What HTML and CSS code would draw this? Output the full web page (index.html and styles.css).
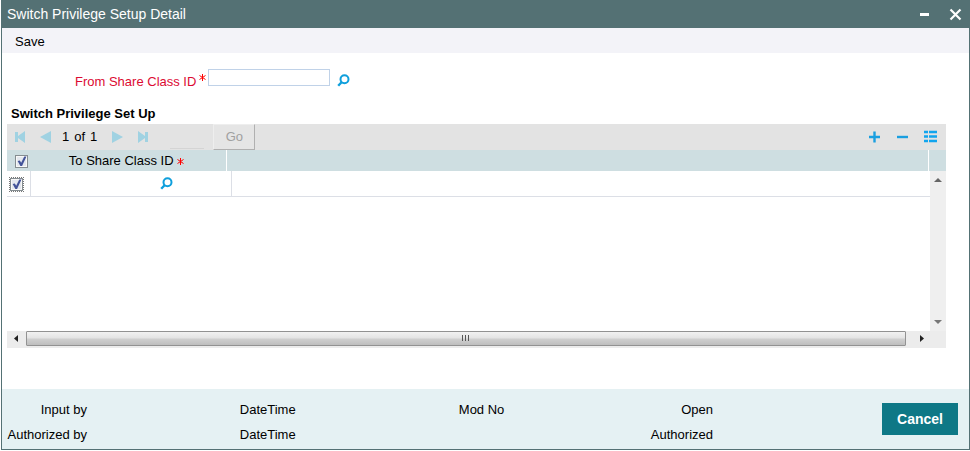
FILE: index.html
```
<!DOCTYPE html>
<html lang="en">

<head>
    <meta charset="UTF-8">
    <meta name="viewport" content="width=device-width, initial-scale=1.0">
    <title>Switch Privilege Setup Detail</title>
    <link rel="stylesheet" href="styles.css">
</head>

<body>

    <div class="window">
        <header class="title-bar">
            <h1>Switch Privilege Setup Detail</h1>
            <button type="button" class="icon-btn" aria-label="Minimize">
                <svg width="13" height="13" viewBox="0 0 13 13"><path d="M2 6.5h9" stroke="#fff" stroke-width="3"/></svg>
            </button>
            <button type="button" class="icon-btn" aria-label="Close">
                <svg width="13" height="13" viewBox="0 0 13 13"><path d="M1.5 1.5l10 10M11.5 1.5l-10 10" stroke="#fff" stroke-width="2.2"/></svg>
            </button>
        </header>

        <nav class="menu-bar">
            <a href="#">Save</a>
        </nav>

        <main>
            <div class="field">
                <label for="fromClass">From Share Class ID</label>
                <svg class="star" width="7" height="7" viewBox="0 0 7 7"><path d="M3.5 0v7M.5 1.5l6 4M6.5 1.5l-6 4" stroke="#f00"/></svg>
                <input type="text" id="fromClass">
                <button type="button" class="icon-btn lookup" aria-label="Find share class">
                    <svg width="13" height="13" viewBox="0 0 13 13"><circle cx="7.5" cy="5.2" r="4" fill="none" stroke="#0f9fdc" stroke-width="2"/><path d="M4.6 8.2L1.2 11.8" stroke="#0f9fdc" stroke-width="2.4"/></svg>
                </button>
            </div>

            <h2>Switch Privilege Set Up</h2>

            <section class="grid">
                <div class="grid-bar">
                    <button type="button" class="icon-btn" aria-label="First page">
                        <svg width="12" height="12" viewBox="0 0 12 12" fill="#a0d2e2"><path d="M1 1h3v4l7-5v12L4 7v4H1z"/></svg>
                    </button>
                    <button type="button" class="icon-btn" aria-label="Previous page">
                        <svg width="12" height="12" viewBox="0 0 12 12" fill="#a0d2e2"><path d="M11 0v12L0 6z"/></svg>
                    </button>
                    <div class="pages"><span>1</span><span>of</span><span>1</span></div>
                    <button type="button" class="icon-btn" aria-label="Next page">
                        <svg width="12" height="12" viewBox="0 0 12 12" fill="#a0d2e2"><path d="M1 0v12l11-6z"/></svg>
                    </button>
                    <button type="button" class="icon-btn" aria-label="Last page">
                        <svg width="12" height="12" viewBox="0 0 12 12" fill="#a0d2e2"><path d="M11 1H8v4L1 0v12l7-5v4h3z"/></svg>
                    </button>
                    <input type="text" class="page-no" aria-label="Page number">
                    <button type="button" class="go" disabled>Go</button>
                    <div class="row-tools">
                        <button type="button" class="icon-btn" aria-label="Add row">
                            <svg width="14" height="14" viewBox="0 0 14 14"><path d="M2 7h11M7.5 1.5v11" stroke="#1a9fe0" stroke-width="2.4"/></svg>
                        </button>
                        <button type="button" class="icon-btn" aria-label="Delete row">
                            <svg width="14" height="14" viewBox="0 0 14 14"><path d="M2 7h11" stroke="#1a9fe0" stroke-width="2.4"/></svg>
                        </button>
                        <button type="button" class="icon-btn" aria-label="Single record view">
                            <svg width="14" height="14" viewBox="0 0 14 14"><path d="M1 2h4M6 2h8M1 6.5h4M6 6.5h8M1 11h4M6 11h8" stroke="#12a5ee" stroke-width="2.4"/></svg>
                        </button>
                    </div>
                </div>

                <table class="grid-head">
                    <colgroup><col class="head-check"><col class="head-id"><col><col class="head-end"></colgroup>
                    <tr>
                        <th><input type="checkbox" class="tick" aria-label="Select all rows" checked></th>
                        <th>To Share Class ID <svg width="7" height="7" viewBox="0 0 7 7"><path d="M3.5 0v7M.5 1.5l6 4M6.5 1.5l-6 4" stroke="#f00"/></svg></th>
                        <th></th>
                        <th></th>
                    </tr>
                </table>

                <div class="grid-body">
                    <div class="rows">
                        <table>
                            <colgroup><col class="body-check"><col class="body-id"><col></colgroup>
                            <tr>
                                <td><input type="checkbox" class="tick" aria-label="Select row" checked></td>
                                <td>
                                    <div class="id-cell">
                                        <input type="text" aria-label="To Share Class ID">
                                        <button type="button" class="icon-btn" aria-label="Find share class">
                                            <svg width="13" height="13" viewBox="0 0 13 13"><circle cx="7.5" cy="5.2" r="4" fill="none" stroke="#0f9fdc" stroke-width="2"/><path d="M4.6 8.2L1.2 11.8" stroke="#0f9fdc" stroke-width="2.4"/></svg>
                                        </button>
                                    </div>
                                </td>
                                <td></td>
                            </tr>
                        </table>
                    </div>
                    <div class="scroll-y">
                        <svg width="8" height="4" viewBox="0 0 8 4"><path d="M0 4l4-4 4 4z" fill="#666"/></svg>
                        <svg width="8" height="4" viewBox="0 0 8 4"><path d="M0 0h8L4 4z" fill="#777"/></svg>
                    </div>
                </div>

                <div class="scroll-x">
                    <svg width="4" height="7" viewBox="0 0 4 7"><path d="M4 0v7L0 3.5z" fill="#222"/></svg>
                    <div class="thumb">
                        <svg width="8" height="7" viewBox="0 0 8 7"><path d="M.5 0v6M3.500 0v6M6.500 0v6" stroke="#555"/></svg>
                    </div>
                    <svg width="4" height="7" viewBox="0 0 4 7"><path d="M0 0v7l4-3.500z" fill="#222"/></svg>
                </div>
            </section>
        </main>

        <footer>
            <div class="audit">
                <span>Input by</span>
                <span>DateTime</span>
                <span>Mod No</span>
                <span>Open</span>
                <span>Authorized by</span>
                <span>DateTime</span>
                <span></span>
                <span>Authorized</span>
            </div>
            <button type="button" class="cancel">Cancel</button>
        </footer>
    </div>

</body>

</html>
```
FILE: styles.css
```
* {
    box-sizing: border-box;
}

body {
    margin: 0;
    font-family: 'Liberation Sans', Arial, sans-serif;
    font-size: 13px;
    line-height: 16px;
    color: #000;
    background-color: #fff;
}

.window {
    display: flex;
    flex-direction: column;
    min-height: calc(100vh - 1px);
    margin: 0 0 1px 1px;
    border: 1px solid #547174;
    border-top: none;
}

svg {
    display: block;
}

.icon-btn {
    padding: 0;
    border: none;
    background: none;
    cursor: pointer;
}

/* Title and menu */
.title-bar {
    display: flex;
    align-items: center;
    gap: 18px;
    height: 28px;
    padding: 0 7px 0 5px;
    background-color: #547174;
}

h1 {
    flex: 1;
    margin: 0;
    font-size: 14px;
    font-weight: normal;
    color: #fff;
}

.menu-bar {
    height: 25px;
    padding: 6px 13px 0;
    background-color: #f3f3f8;
}

.menu-bar a {
    color: #000;
    text-decoration: none;
}

main {
    flex: 1;
    padding: 16px 23px 16px 5px;
}

/* From share class */
.field {
    display: flex;
    align-items: flex-start;
    height: 36px;
    padding-left: 68px;
}

.field label {
    padding-top: 5px;
    color: #dc0a32;
}

.field .star {
    margin: 5px 2px 0 3px;
}

.field input {
    width: 122px;
    height: 17px;
    border: 1px solid #c0d2e8;
}

.field .lookup {
    margin: 5px 0 0 7px;
}

h2 {
    margin: 0 0 2px 4px;
    padding-top: 1px;
    font-size: 13px;
}

/* Grid */
.grid-bar {
    display: flex;
    align-items: center;
    height: 26px;
    padding-left: 7px;
    background-color: #e3e3e3;
}

.grid-bar .icon-btn + .icon-btn {
    margin-left: 14px;
}

.pages {
    display: flex;
    gap: 5px;
    margin: 0 14px 0 10px;
}

.page-no {
    width: 34px;
    height: 24px;
    margin-left: 21px;
    border: none;
    border-bottom: 1px solid #d4d4d4;
    background: none;
}

.go {
    width: 42px;
    height: 26px;
    margin-left: 9px;
    padding: 0;
    border: 1px solid #eee;
    border-right-color: #b0b0b0;
    border-bottom-color: #b0b0b0;
    font: inherit;
    color: #a0a0a0;
    background-color: #e5e5e5;
}

.row-tools {
    display: flex;
    margin-left: auto;
    padding-right: 9px;
}

table {
    width: 100%;
    border-collapse: separate;
    border-spacing: 0;
    table-layout: fixed;
}

th,
td {
    padding: 0;
    font-weight: normal;
}

.grid-head {
    background-color: #cedee1;
}

.grid-head th {
    height: 21px;
    border-right: 1px solid #fff;
}

.grid-head th:first-child {
    padding-left: 8px;
    border-right: none;
}

.grid-head th:last-child {
    border-right: none;
}

.grid-head th svg {
    display: inline-block;
}

.head-check {
    width: 20px;
}

.head-id {
    width: 200px;
}

.head-end {
    width: 17px;
}

.tick {
    appearance: none;
    display: block;
    width: 13px;
    height: 13px;
    margin: 0;
    border: 1px solid #858d91;
    background-color: #e4e8ef;
    box-shadow: inset 0 0 0 1px #f8f8f8;
}

.tick:checked::before {
    content: "";
    display: block;
    height: 11px;
    background-color: #435399;
    clip-path: polygon(15% 45%, 35% 40%, 47% 62%, 75% 5%, 95% 5%, 55% 92%, 40% 92%);
}

.grid-head .tick {
    margin-top: 2px;
}

.rows .tick {
    margin: 2px 0 0 3px;
    outline: 1px dotted #777;
}

.grid-body {
    display: flex;
    min-height: 160px;
}

.rows {
    flex: 1;
}

.rows td {
    height: 26px;
    border-right: 1px solid #dcdfe6;
    border-bottom: 1px solid #dcdfe6;
}

.rows td:last-child {
    border-right: none;
}

.body-check {
    width: 24px;
}

.body-id {
    width: 201px;
}

.id-cell {
    display: flex;
    align-items: center;
}

.id-cell input {
    width: 125px;
    height: 20px;
    margin-right: 4px;
    border: none;
}

.scroll-y {
    display: flex;
    flex-direction: column;
    justify-content: space-between;
    align-items: center;
    width: 16px;
    padding: 7px 0;
    background-color: #efefef;
}

.scroll-x {
    display: flex;
    align-items: center;
    height: 17px;
    padding: 0 22px 2px 7px;
    background-color: #ececec;
}

.thumb {
    display: flex;
    flex: 1;
    align-items: center;
    justify-content: center;
    height: 15px;
    margin: 0 14px 0 8px;
    border: 1px solid #929292;
    border-radius: 1px;
    background: linear-gradient(#f2f2f2, #e4e4e4 45%, #cfcfcf 55%, #bebebe);
}

/* Record status */
footer {
    display: flex;
    align-items: flex-start;
    justify-content: space-between;
    height: 60px;
    padding: 8px 11px 0 0;
    background-color: #e5f1f3;
}

.audit {
    display: grid;
    flex: 1;
    grid-template-columns: 85px 1fr 1fr 1fr;
    margin-right: 169px;
    line-height: 25px;
    text-align: right;
}

.cancel {
    width: 76px;
    height: 32px;
    margin-top: 6px;
    padding: 0;
    border: none;
    font: bold 14px 'Liberation Sans', Arial, sans-serif;
    color: #fff;
    background-color: #0e7886;
    cursor: pointer;
}
```
